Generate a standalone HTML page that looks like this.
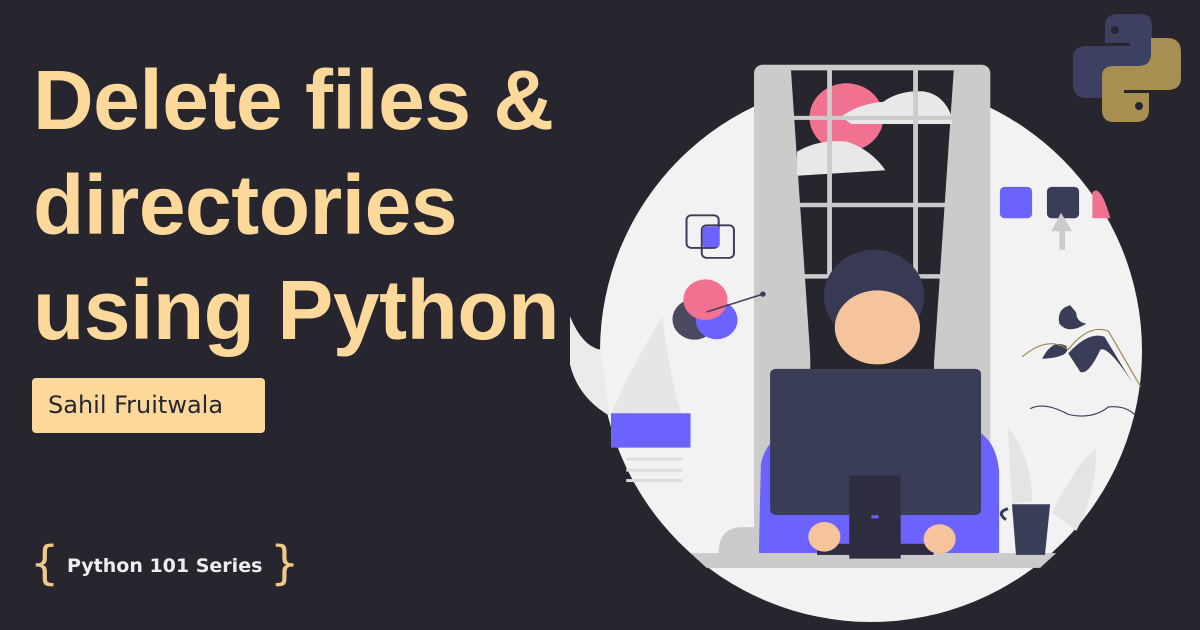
<!DOCTYPE html>
<html><head><meta charset="utf-8"><style>
html,body{margin:0;padding:0}
body{width:1200px;height:630px;background:#27262e;position:relative;overflow:hidden;font-family:"Liberation Sans","DejaVu Sans",sans-serif}
.t{position:absolute;left:33px;color:#fcd99b;font-weight:bold;font-size:84px;line-height:105px;top:48px;letter-spacing:-0.5px;white-space:nowrap}
.a{position:absolute;left:32px;top:378px;width:233px;height:55px;background:#fcd99b;border-radius:4px;color:#27262e;font-size:24px;line-height:55px;text-indent:16px;font-family:"DejaVu Sans",sans-serif}
.s{position:absolute;left:67px;top:555px;color:#eeeeee;font-weight:bold;font-size:19px;font-family:"DejaVu Sans",sans-serif}
.b{position:absolute;top:536px;color:#f0c98a;font-size:46px;font-family:"DejaVu Sans",sans-serif}
</style></head><body>
<svg width="1200" height="630" style="position:absolute;left:0;top:0">
<circle cx="871" cy="351" r="271" fill="#f2f2f2"/>
<g transform="translate(570,50) scale(0.4018,0.3699)">
<path d="M0,720 Q30,800 75,810 L100,990 Q20,940 0,850Z" fill="#ebebeb"/>
<path d="M100,990 Q150,860 230,720 Q250,900 280,990Z" fill="#e6e6e6"/>
<rect x="102" y="982" width="198" height="93" fill="#6c63ff"/>
<rect x="140" y="1102" width="140" height="8" fill="#ddd"/><rect x="140" y="1132" width="140" height="8" fill="#ddd"/><rect x="140" y="1160" width="140" height="8" fill="#ddd"/>
<rect x="458" y="40" width="588" height="1340" rx="22" fill="#cbcbcb"/>
<polygon points="550,55 955,55 905,860 600,860" fill="#27262e"/>
<circle cx="688" cy="182" r="92" fill="#f07290"/>
<path d="M675,180 Q720,145 780,140 Q820,108 880,112 Q930,120 950,180 L950,200 L700,200Z" fill="#e8e8e8"/>
<path d="M565,275 Q620,240 690,248 Q750,270 785,325 L565,340Z" fill="#e8e8e8"/>
<rect x="458" y="178" width="588" height="11" fill="#cbcbcb"/>
<rect x="458" y="413" width="588" height="12" fill="#cbcbcb"/>
<rect x="458" y="606" width="588" height="12" fill="#cbcbcb"/>
<rect x="640" y="50" width="12" height="560" fill="#cbcbcb"/>
<rect x="854" y="50" width="12" height="560" fill="#cbcbcb"/>
<rect x="598" y="780" width="308" height="95" fill="#27262e"/>
<circle cx="757" cy="665" r="125" fill="#383a55"/>
<ellipse cx="765" cy="750" rx="106" ry="100" fill="#f5c49c"/>
<path d="M470,1360 L475,1120 Q490,1040 560,1030 L990,1020 Q1060,1040 1068,1140 L1068,1360Z" fill="#6c63ff"/>
<rect x="498" y="862" width="525" height="395" rx="14" fill="#3a3d58"/>
<path d="M300,1360 L370,1360 Q370,1290 430,1290 L470,1290 L470,1360 L1210,1360 L1170,1400 L340,1400Z" fill="#cbcbcb"/>
<rect x="615" y="1335" width="290" height="30" fill="#2f2e41"/>
<rect x="695" y="1150" width="128" height="225" fill="#2f2e41"/>
<rect x="750" y="1258" width="18" height="8" fill="#6c63ff"/>
<circle cx="633" cy="1316" r="40" fill="#f5c49c"/><circle cx="920" cy="1322" r="40" fill="#f5c49c"/>
<path d="M1090,1240 Q1060,1250 1085,1270" stroke="#3a3d58" stroke-width="8" fill="none"/>
<path d="M1100,1228 L1195,1228 L1182,1365 L1110,1365Z" fill="#3a3d58"/>
<path d="M1090,1020 Q1150,1100 1150,1220 L1100,1228Z" fill="#e4e4e4"/>
<path d="M1200,1250 Q1260,1120 1310,1075 Q1310,1200 1260,1300Z" fill="#e4e4e4"/>
<rect x="1070" y="370" width="80" height="85" rx="12" fill="#6c63ff"/>
<rect x="1187" y="370" width="80" height="85" rx="12" fill="#3a3d58"/>
<path d="M1300,385 Q1320,360 1345,455 L1300,455Z" fill="#f07290"/>
<path d="M1222,440 L1250,490 L1232,490 L1232,540 L1218,540 L1218,490 L1198,490Z" fill="#cbcbcb"/>
<rect x="290" y="447" width="80" height="88" rx="12" fill="none" stroke="#3a3d58" stroke-width="5"/>
<rect x="328" y="474" width="80" height="88" rx="12" fill="none" stroke="#3a3d58" stroke-width="5"/>
<rect x="330" y="477" width="42" height="56" rx="6" fill="#6c63ff"/>
<circle cx="310" cy="728" r="55" fill="#4a4960"/>
<circle cx="365" cy="730" r="52" fill="#6c63ff"/>
<circle cx="337" cy="675" r="55" fill="#f07290"/>
<line x1="340" y1="708" x2="480" y2="660" stroke="#3a3d58" stroke-width="4"/><circle cx="480" cy="660" r="7" fill="#3a3d58"/>
<path d="M1245,690 Q1210,700 1218,740 Q1240,770 1285,740 Q1260,735 1260,710Z" fill="#3a3d58"/>
<path d="M1175,835 Q1200,780 1235,800 Q1250,830 1175,835Z M1240,820 Q1290,760 1330,775 L1400,900 Q1340,800 1320,810 Q1290,880 1270,870Z" fill="#3a3d58"/>
<path d="M1125,830 Q1190,770 1240,810 Q1290,740 1340,760 L1420,910" stroke="#a08850" stroke-width="3" fill="none"/>
<path d="M1145,970 Q1180,950 1240,985 Q1300,1000 1340,965 Q1380,960 1405,985" stroke="#3a3d58" stroke-width="3" fill="none"/>
</g>
<g transform="translate(1060,10)">
<path d="M58,4 H80 Q92,4 92,16 V50 Q92,60 80,60 H56 Q43,60 43,72 V88 H27 Q13,88 13,74 V48 Q13,36 27,36 H70 V33 H45 V16 Q45,4 58,4Z" fill="#3d4060"/>
<circle cx="55" cy="20" r="4" fill="#27262e"/>
<g transform="rotate(180 67 58)"><path d="M58,4 H80 Q92,4 92,16 V50 Q92,60 80,60 H56 Q43,60 43,72 V88 H27 Q13,88 13,74 V48 Q13,36 27,36 H70 V33 H45 V16 Q45,4 58,4Z" fill="#a88f52"/>
<circle cx="55" cy="20" r="4" fill="#27262e"/></g>
</g>
</svg>
<div class="t">Delete files &amp;<br>directories<br>using Python</div>
<div class="a">Sahil Fruitwala</div>
<div class="b" style="left:30px">{</div>
<div class="s">Python 101 Series</div>
<div class="b" style="left:270px">}</div>
</body></html>
